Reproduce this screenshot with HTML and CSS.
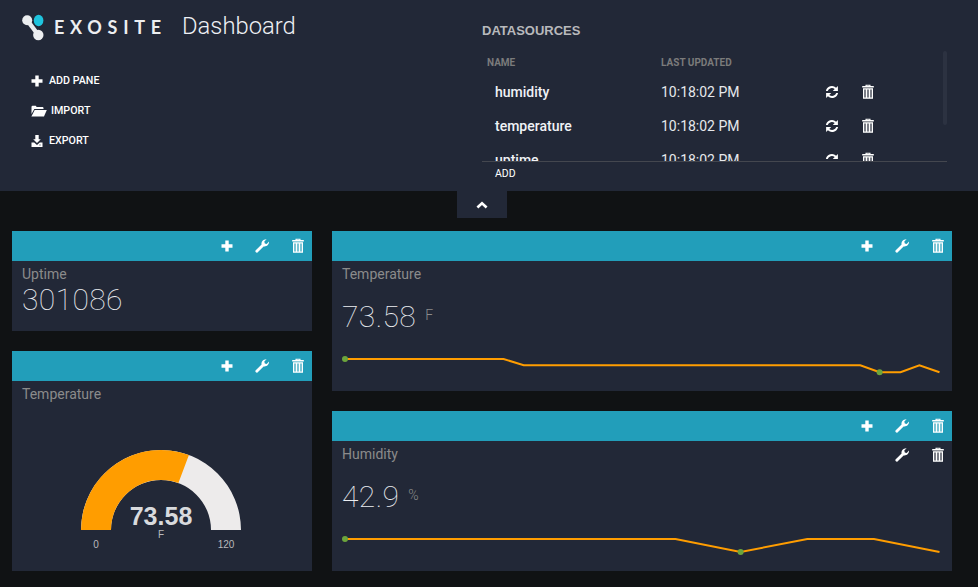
FILE: index.html
```html
<!DOCTYPE html>
<html>
<head>
    <title>Exosite Dashboard</title>
    <meta charset="UTF-8">
    <meta name="viewport" content="width=device-width, initial-scale=1.0">
    <link rel="stylesheet" href="styles.css">
</head>
<body>
<svg class="sprite" width="0" height="0">
    <symbol id="i-plus" viewBox="0 0 16 16"><path d="M6.300 2.500h3.400v3.800h3.800v3.400H9.700v3.800H6.300V9.700H2.500V6.300h3.800z"/></symbol>
    <symbol id="i-wrench" viewBox="0 0 16 16"><path d="M1.500 12.600 7.600 6.600C7 4 9 1 12.600 1.200L10.300 3.600 10.800 5.500 12.700 6 15 3.600C15.300 7 12.300 9 9.600 8.400L3.500 14.600C2.600 15.400.7 13.600 1.500 12.600z"/></symbol>
    <symbol id="i-trash" viewBox="0 0 16 16"><path d="M5.500 2.100V.8h5v1.300h3.300v1.300H2.200V2.100zM6.600 2.100h2.800v-.4H6.600z" fill-rule="evenodd"/><path d="M3 4.300h10v10.400H3zM4.400 5.400v8.200h1.200V5.400zM7.400 5.400v8.200h1.200V5.400zM10.400 5.400v8.200h1.200V5.400z" fill-rule="evenodd"/></symbol>
    <symbol id="i-refresh" viewBox="0 0 16 16"><path d="M13.900 1.900V7H8.800l1.900-1.900A4.400 4.400 0 0 0 3.700 6.900H1.900A6.100 6.100 0 0 1 12.100 3.700zM2.100 14.100V9h5.100l-1.900 1.900A4.400 4.400 0 0 0 12.300 9.100h1.800A6.100 6.100 0 0 1 3.900 12.300z"/></symbol>
    <symbol id="i-folder" viewBox="0 0 16 12"><path d="M.5 9V1.500L1.300.8h3.400l1 1.200h6.100l.7.700V4H3.300z"/><path d="M3.700 5H15.800L13 11.500H.4z"/></symbol>
    <symbol id="i-export" viewBox="0 0 12 12"><path d="M4.300 0h3.400v4.200h2.100L6 8 2.200 4.200h2.100z"/><path d="M.5 7.600h2.700L6 10l2.800-2.400h2.700V12H.5zM8.500 9.500v1h1v-1z" fill-rule="evenodd"/></symbol>
    <symbol id="i-up" viewBox="0 0 12 8"><path d="M6 .6 11.500 5.600 9.700 7.400 6 4 2.300 7.400.5 5.600z"/></symbol>
</svg>

<header class="top">
    <div class="top-left">
        <div class="brand">
            <svg class="logo" width="22" height="28" viewBox="0 0 22 28">
                <path d="M5 6 16.300 21" stroke="#eceef0" stroke-width="4.500" fill="none"/>
                <circle cx="5.200" cy="6.300" r="5" fill="#eceef0"/>
                <circle cx="16.300" cy="21" r="5.200" fill="#eceef0"/>
                <ellipse cx="16.600" cy="6.500" rx="4.800" ry="5.800" fill="#1fc4de"/>
            </svg>
            <span class="wordmark">EXOSITE</span>
            <h1 class="page-title">Dashboard</h1>
        </div>
        <nav class="actions">
            <a class="action"><svg class="a-plus"><use href="#i-plus"/></svg>ADD PANE</a>
            <a class="action"><svg class="a-folder"><use href="#i-folder"/></svg>IMPORT</a>
            <a class="action"><svg class="a-export"><use href="#i-export"/></svg>EXPORT</a>
        </nav>
    </div>
    <section class="sources">
        <h2 class="sources-title">DATASOURCES</h2>
        <div class="sources-head">
            <span>NAME</span>
            <span>LAST UPDATED</span>
        </div>
        <div class="sources-list">
            <div class="source">
                <span class="source-name">humidity</span>
                <span class="source-time">10:18:02 PM</span>
                <svg class="tool"><use href="#i-refresh"/></svg>
                <svg class="tool"><use href="#i-trash"/></svg>
            </div>
            <div class="source">
                <span class="source-name">temperature</span>
                <span class="source-time">10:18:02 PM</span>
                <svg class="tool"><use href="#i-refresh"/></svg>
                <svg class="tool"><use href="#i-trash"/></svg>
            </div>
            <div class="source">
                <span class="source-name">uptime</span>
                <span class="source-time">10:18:02 PM</span>
                <svg class="tool"><use href="#i-refresh"/></svg>
                <svg class="tool"><use href="#i-trash"/></svg>
            </div>
        </div>
        <div class="sources-add">ADD</div>
        <div class="scrollbar"></div>
    </section>
</header>

<div class="toggle"><svg width="12" height="8"><use href="#i-up"/></svg></div>

<main class="board">
    <div class="col col-left">
        <section class="pane pane-uptime">
            <div class="pane-bar">
                <svg class="bar-icon"><use href="#i-plus"/></svg>
                <svg class="bar-icon"><use href="#i-wrench"/></svg>
                <svg class="bar-icon"><use href="#i-trash"/></svg>
            </div>
            <div class="pane-title">Uptime</div>
            <div class="big-value tight">301086</div>
        </section>
        <section class="pane pane-gauge">
            <div class="pane-bar">
                <svg class="bar-icon"><use href="#i-plus"/></svg>
                <svg class="bar-icon"><use href="#i-wrench"/></svg>
                <svg class="bar-icon"><use href="#i-trash"/></svg>
            </div>
            <div class="pane-title">Temperature</div>
            <svg class="gauge" width="300" height="169" viewBox="0 0 300 169">
                <path d="M69 128A80 80 0 0 1 229 128H199A50 50 0 0 0 99 128z" fill="#edebeb"/>
                <path d="M69 128A80 80 0 0 1 176.900 53L166.400 81.100A50 50 0 0 0 99 128z" fill="#ff9d00"/>
                <text class="gauge-value" x="149" y="122.500">73.58</text>
                <text class="gauge-unit" x="149" y="136">F</text>
                <text class="gauge-tick" x="84" y="146">0</text>
                <text class="gauge-tick" x="214" y="146">120</text>
            </svg>
        </section>
    </div>
    <div class="col col-right">
        <section class="pane pane-spark">
            <div class="pane-bar">
                <svg class="bar-icon"><use href="#i-plus"/></svg>
                <svg class="bar-icon"><use href="#i-wrench"/></svg>
                <svg class="bar-icon"><use href="#i-trash"/></svg>
            </div>
            <div class="pane-title">Temperature</div>
            <div class="big-value">73.58<span class="unit">F</span></div>
            <svg class="spark" width="620" height="50" viewBox="0 0 620 50">
                <polyline points="13,18 171.600,18 191.700,24.300 528.300,24.300 547.600,31.300 568.500,31.300 587.400,24.300 607.500,31.300"/>
                <circle cx="13" cy="18" r="3"/>
                <circle cx="547.600" cy="31.300" r="3"/>
            </svg>
        </section>
        <section class="pane pane-spark">
            <div class="pane-bar">
                <svg class="bar-icon"><use href="#i-plus"/></svg>
                <svg class="bar-icon"><use href="#i-wrench"/></svg>
                <svg class="bar-icon"><use href="#i-trash"/></svg>
            </div>
            <div class="pane-title">Humidity
                <span class="title-tools">
                    <svg class="bar-icon"><use href="#i-wrench"/></svg>
                    <svg class="bar-icon"><use href="#i-trash"/></svg>
                </span>
            </div>
            <div class="big-value">42.9<span class="unit">%</span></div>
            <svg class="spark" width="620" height="50" viewBox="0 0 620 50">
                <polyline points="13,18 343.500,18 408.600,31 475.300,18 542,18 607.500,31"/>
                <circle cx="13" cy="18" r="3"/>
                <circle cx="408.600" cy="31" r="3"/>
            </svg>
        </section>
    </div>
</main>
</body>
</html>
```

FILE: styles.css
```css
body {
  margin: 0;
  background-color: #101214;
  font-family: Roboto, "Liberation Sans", sans-serif;
  color: #fff;
  overflow: hidden;
}
svg {
  fill: currentColor;
}
.sprite {
  position: absolute;
}

/* header */
.top {
  display: flex;
  height: 191px;
  background-color: #222837;
  box-sizing: border-box;
}
.top-left {
  width: 482px;
  padding: 14px 0 0 22px;
  box-sizing: border-box;
}
.brand {
  display: flex;
  align-items: center;
  height: 28px;
}
.logo {
  flex: none;
}
.wordmark {
  margin: 0 0 2px 10px;
  width: 128px;
  font-family: Lato, sans-serif;
  font-size: 18px;
  font-weight: 700;
  letter-spacing: 5.700px;
  color: #eceef0;
}
.page-title {
  margin: 0 0 4px;
  font-size: 23.800px;
  font-weight: 300;
  color: #eef0f4;
}
.actions {
  display: flex;
  flex-direction: column;
  gap: 10px;
  margin: 28px 0 0 9px;
}
.action {
  display: flex;
  align-items: center;
  height: 20px;
  font-size: 10.700px;
  font-weight: 500;
}
.a-plus {
  width: 16px;
  height: 16px;
  margin: 2px 4px 0 -2px;
}
.a-folder {
  width: 16px;
  height: 12px;
  margin: 2px 4px 0 0;
}
.a-export {
  width: 12px;
  height: 12px;
  margin: 2px 6px 0 0;
}

/* datasources */
.sources {
  position: relative;
  width: 465px;
}
.sources-title {
  margin: 23px 0 0;
  font-family: "Liberation Sans", sans-serif;
  font-size: 13px;
  line-height: 15px;
  font-weight: 700;
  color: #b8b9bc;
}
.sources-head {
  display: flex;
  margin: 17px 0 0 5px;
  font-size: 10px;
  line-height: 16px;
  font-weight: 700;
  color: #7b7b7b;
}
.sources-head span:first-child {
  width: 174px;
}
.sources-list {
  height: 91px;
  padding-top: 4px;
  box-sizing: border-box;
  overflow: hidden;
  border-bottom: 1px solid #44474f;
}
.source {
  display: flex;
  align-items: center;
  height: 34px;
  font-size: 14px;
}
.source-name {
  width: 166px;
  margin-left: 13px;
  font-weight: 500;
  color: #f0f2f6;
}
.source-time {
  width: 163px;
  color: #e6e8ec;
}
.tool {
  width: 16px;
  height: 16px;
  margin-right: 19.500px;
}
.sources-add {
  margin: 5px 0 0 13px;
  font-size: 10.500px;
  line-height: 14px;
}
.scrollbar {
  position: absolute;
  top: 51px;
  right: 0;
  width: 4px;
  height: 74px;
  border-radius: 2px;
  background-color: #2c3241;
}
.toggle {
  display: flex;
  align-items: center;
  justify-content: center;
  width: 50px;
  height: 27px;
  margin-left: 457px;
  background-color: #222837;
}

/* panes */
.board {
  display: flex;
  gap: 20px;
  padding: 13px 12px 0;
}
.col {
  display: flex;
  flex-direction: column;
  gap: 20px;
}
.col-left {
  width: 300px;
}
.col-right {
  width: 620px;
}
.pane {
  background-color: #222837;
}
.pane-uptime {
  height: 100px;
}
.pane-gauge {
  height: 220px;
}
.pane-spark {
  height: 160px;
}
.pane-bar {
  display: flex;
  align-items: center;
  justify-content: flex-end;
  gap: 19.500px;
  height: 30px;
  padding-right: 6.500px;
  background-color: #229eba;
}
.bar-icon {
  width: 16px;
  height: 16px;
}
.pane-title {
  position: relative;
  padding: 5px 10px 0;
  font-size: 14px;
  line-height: 16px;
  color: #8b8b8b;
}
.title-tools {
  position: absolute;
  top: 6px;
  right: 6.500px;
  display: flex;
  gap: 19.500px;
  color: #fff;
}
.big-value {
  height: 59px;
  padding: 15px 10px 0;
  box-sizing: border-box;
  font-size: 30px;
  line-height: 36px;
  font-weight: 100;
  letter-spacing: .4px;
  color: #eceef2;
}
.big-value.tight {
  height: auto;
  padding-top: 0;
}
.unit {
  margin-left: 9px;
  font-size: 14px;
  font-weight: 300;
  color: #8b8b8b;
  vertical-align: 7px;
}
.spark {
  display: block;
}
.spark polyline {
  fill: none;
  stroke: #ff9d00;
  stroke-width: 2;
}
.spark circle {
  fill: #6ca53c;
}

/* gauge */
.gauge {
  display: block;
}
.gauge text {
  text-anchor: middle;
  font-family: "Liberation Sans", sans-serif;
}
.gauge-value {
  font-size: 25px;
  font-weight: 700;
  fill: #d8dadd;
}
.gauge-unit {
  font-size: 10px;
  fill: #b8b9bc;
}
.gauge-tick {
  font-size: 10px;
  fill: #b8b9bc;
}
```
